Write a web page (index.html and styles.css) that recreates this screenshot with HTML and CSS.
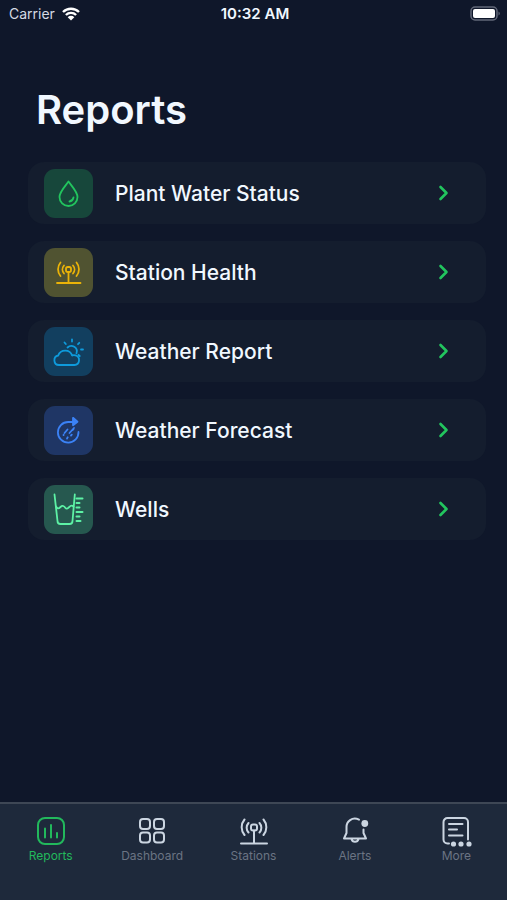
FILE: index.html
```html
<!DOCTYPE html>
<html lang="en">
<head>
    <meta charset="UTF-8">
    <meta name="viewport" content="width=device-width, initial-scale=1.0">
    <title>Reports</title>
    <link rel="stylesheet" href="styles.css">
</head>
<body>
    <!-- Status bar -->
    <header class="status-bar">
        <div class="carrier">
            <span>Carrier</span>
            <svg class="wifi" viewBox="0 0 18 14">
                <path d="M1 5a11.500 11.500 0 0 1 16 0M3.900 8a7.300 7.300 0 0 1 10.200 0" fill="none" stroke="currentColor" stroke-width="2.400"/>
                <path d="M9 13.500L5.700 10.200a4.700 4.700 0 0 1 6.600 0z" fill="currentColor"/>
            </svg>
        </div>
        <div class="time">10:32 AM</div>
        <div class="battery">
            <svg viewBox="0 0 31 16">
                <rect x="1" y="1" width="26" height="13" rx="4" fill="none" stroke="#626878" stroke-width="1.500"/>
                <rect x="3" y="3" width="22" height="9" rx="2" fill="#fff"/>
                <path d="M28.500 5.500v4a2.200 2.200 0 0 0 0-4z" fill="#626878"/>
            </svg>
        </div>
    </header>

    <!-- Report list -->
    <main class="content">
        <h1 class="title">Reports</h1>
        <nav class="report-list">
            <a class="report" href="#water">
                <span class="tile tile-water">
                    <svg viewBox="0 0 49 49">
                        <path d="M24.500 12.500C21.500 17 15.500 22.500 15.500 28a9 9 0 0 0 18 0c0-5.500-6-11-9-15.500z"/>
                        <path d="M29.500 28.500a5 5 0 0 1-4 4"/>
                    </svg>
                </span>
                <span class="report-name">Plant Water Status</span>
                <svg class="chevron" viewBox="0 0 10 16"><path d="M1.500 2l6 6-6 6"/></svg>
            </a>
            <a class="report" href="#station">
                <span class="tile tile-station">
                    <svg viewBox="0 0 49 49">
                        <path d="M13 35h23.500M24.500 24.500V35"/>
                        <rect x="22" y="19" width="5" height="5" rx="1.800"/>
                        <path d="M20 17.500a6 6 0 0 0 0 8M29 17.500a6 6 0 0 1 0 8M16.500 14.500a10.500 10.500 0 0 0 0 13.500M32.500 14.500a10.500 10.500 0 0 1 0 13.500"/>
                    </svg>
                </span>
                <span class="report-name">Station Health</span>
                <svg class="chevron" viewBox="0 0 10 16"><path d="M1.500 2l6 6-6 6"/></svg>
            </a>
            <a class="report" href="#weather">
                <span class="tile tile-weather">
                    <svg viewBox="0 0 49 49">
                        <path d="M15 38h15.500a4.900 4.900 0 0 0 1-9.600c-1.600-.4-2.800-.1-3.300.2a7.400 7.400 0 0 0-14-.1c-5.400 1-5 9.500.8 9.500z"/>
                        <path d="M23.500 20.500a5.500 5.500 0 0 1 9 5.800"/>
                        <path d="M28 12.500v2M20.500 15.500l1.300 1.500M35.300 15.800L34 17.200M37 22.500h2M34.500 27.800l1.200 1.200"/>
                    </svg>
                </span>
                <span class="report-name">Weather Report</span>
                <svg class="chevron" viewBox="0 0 10 16"><path d="M1.500 2l6 6-6 6"/></svg>
            </a>
            <a class="report" href="#forecast">
                <span class="tile tile-forecast">
                    <svg viewBox="0 0 49 49">
                        <path d="M34.500 26a10.300 10.300 0 1 1-10.300-10H29"/>
                        <path d="M29 11.800l4.500 3.900-4.500 3.600z" fill="currentColor"/>
                        <path d="M20.500 27l3-3.500M25.500 27l4.500-5M23.500 31.500l.2-.2M27 29.500l.8-.8M28.500 24l1-1M19.500 29l.2-.2M23 32.500l.2-.2"/>
                    </svg>
                </span>
                <span class="report-name">Weather Forecast</span>
                <svg class="chevron" viewBox="0 0 10 16"><path d="M1.500 2l6 6-6 6"/></svg>
            </a>
            <a class="report" href="#wells">
                <span class="tile tile-wells">
                    <svg viewBox="0 0 49 49">
                        <path d="M10.500 9.500L13.500 36a3 3 0 0 0 3 3h9a3 3 0 0 0 3-3l2.300-26.500"/>
                        <path d="M12 21.500c1.500 2.500 2.500 2.500 4.500.5s3.500-1 5 1 3.500-1 5-2 2-.5 3 .5"/>
                        <path d="M32.500 13.500h6M32.500 18h3M32.500 22.500h3M32.500 27h6M32.500 31.500h3M32.500 36h4" stroke-width="2"/>
                    </svg>
                </span>
                <span class="report-name">Wells</span>
                <svg class="chevron" viewBox="0 0 10 16"><path d="M1.500 2l6 6-6 6"/></svg>
            </a>
        </nav>
    </main>

    <!-- Bottom tabs -->
    <nav class="tab-bar">
        <a class="tab active" href="#reports">
            <svg viewBox="0 0 30 30">
                <rect x="2" y="2" width="26" height="26" rx="7"/>
                <path d="M9 12.500v9M15 9v12.500M21 17v4.500"/>
            </svg>
            <span>Reports</span>
        </a>
        <a class="tab" href="#dashboard">
            <svg viewBox="0 0 30 30">
                <rect x="3" y="3" width="10" height="10" rx="3"/>
                <rect x="17" y="3" width="10" height="10" rx="3"/>
                <rect x="3" y="16.500" width="10" height="10" rx="3"/>
                <rect x="17" y="16.500" width="10" height="10" rx="3"/>
            </svg>
            <span>Dashboard</span>
        </a>
        <a class="tab" href="#stations">
            <svg viewBox="0 0 30 30">
                <path d="M2 27.500h26M15 14.500v13"/>
                <rect x="12" y="8.500" width="6" height="6" rx="2"/>
                <path d="M9.500 7a7 7 0 0 0 0 9.500M20.500 7a7 7 0 0 1 0 9.500M5.500 3.500a12 12 0 0 0 0 15.500M24.500 3.500a12 12 0 0 1 0 15.500"/>
            </svg>
            <span>Stations</span>
        </a>
        <a class="tab" href="#alerts">
            <svg viewBox="0 0 30 30">
                <path d="M19 3.600C12 .5 6.500 5.500 6.500 11v6L4 22.500h22L23.500 17v-3.500M11.500 23a3.600 3.600 0 0 0 7 0"/>
                <circle cx="24.800" cy="7.500" r="3.400" fill="currentColor" stroke="none"/>
            </svg>
            <span>Alerts</span>
        </a>
        <a class="tab" href="#more">
            <svg viewBox="0 0 30 30">
                <path d="M8 27.500H6.500a4 4 0 0 1-4-4V6a4 4 0 0 1 4-4H23a4 4 0 0 1 4 4v17.500M8 8h13.500M8 13.500h8M8 19.500h13.500"/>
                <g fill="currentColor" stroke="none">
                    <circle cx="12.500" cy="28" r="2.600"/>
                    <circle cx="20" cy="28" r="2.600"/>
                    <circle cx="28" cy="28" r="2.600"/>
                </g>
            </svg>
            <span>More</span>
        </a>
    </nav>
</body>
</html>
```

FILE: styles.css
```css
* {
    box-sizing: border-box;
}

body {
    margin: 0;
    min-height: 100vh;
    display: flex;
    flex-direction: column;
    background-color: #0f172a;
    color: #f1f8ff;
    font-family: Inter, "Open Sans", sans-serif;
}

a {
    color: inherit;
    text-decoration: none;
}

svg {
    display: block;
    overflow: visible;
}

.status-bar {
    display: grid;
    grid-template-columns: 1fr auto 1fr;
    align-items: center;
    height: 27px;
    padding: 0 6px 0 9px;
    font-size: 14px;
}

.carrier {
    display: flex;
    align-items: center;
    gap: 7px;
    color: #d5dae3;
}

.wifi {
    width: 18px;
    height: 14px;
    color: #fff;
}

.time {
    font-size: 15px;
    font-weight: 600;
}

.battery svg {
    width: 31px;
    height: 16px;
    margin-left: auto;
}

.content {
    flex: 1;
    padding: 54px 21px 24px 28px;
}

.title {
    margin: 0 0 23px;
    padding-left: 8px;
    font-size: 40px;
    line-height: 58px;
    font-weight: 600;
}

.report-list {
    display: flex;
    flex-direction: column;
    gap: 17px;
}

.report {
    display: flex;
    align-items: center;
    gap: 22px;
    height: 62px;
    padding: 0 37px 0 16px;
    border-radius: 16px;
    background-color: #141d2e;
}

.report-name {
    flex: 1;
    font-size: 21px;
    font-weight: 500;
}

.tile {
    width: 49px;
    height: 49px;
    border-radius: 11px;
}

.tile svg,
.chevron,
.tab svg {
    fill: none;
    stroke: currentColor;
    stroke-width: 1.8;
    stroke-linecap: round;
    stroke-linejoin: round;
}

.tile-water {
    background-color: #17473b;
    color: #22c55e;
}

.tile-station {
    background-color: #505331;
    color: #eab308;
}

.tile-weather {
    background-color: #123f5f;
    color: #0e9bdc;
}

.tile-forecast {
    background-color: #1f3665;
    color: #3b82f6;
}

.tile-wells {
    background-color: #26584f;
    color: #5df2a5;
}

.chevron {
    width: 10px;
    height: 16px;
    color: #22c55e;
    stroke-width: 2.6;
}

/* Tabs */
.tab-bar {
    display: flex;
    height: 98px;
    padding-top: 12px;
    border-top: 2px solid #3e4755;
    background-color: #1e293b;
}

.tab {
    flex: 1;
    display: flex;
    flex-direction: column;
    align-items: center;
    gap: 2px;
    font-size: 12px;
    line-height: 16px;
    color: #6b7483;
}

.tab svg {
    width: 30px;
    height: 30px;
    color: #cbd5e1;
    stroke-width: 2;
}

.active,
.tab.active svg {
    color: #22b85c;
}
```
